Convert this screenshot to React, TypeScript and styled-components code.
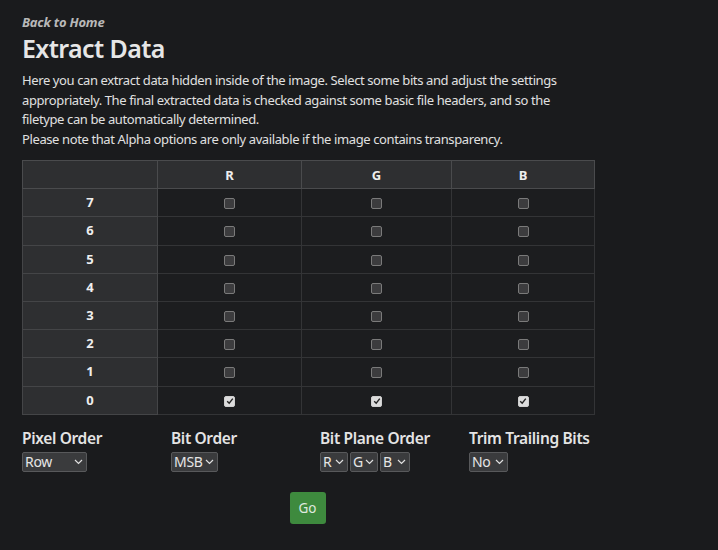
import React from "react";
import styled, { createGlobalStyle } from "styled-components";

const Global = createGlobalStyle`
  html, body { margin: 0; padding: 0; background: #1a1b1d; }
  body { font-family: "Noto Sans", "Open Sans", sans-serif; color: #e2e2e2; }
`;

const Page = styled.div`
  padding: 13px 22px 20px 22px;
  width: 700px;
  box-sizing: border-box;
`;

const Back = styled.a`
  display: block;
  font-size: 13px;
  line-height: 18px;
  font-style: italic;
  font-weight: 700;
  color: #b8b8b8;
  text-decoration: none;
  letter-spacing: -0.2px;
`;

const Title = styled.h1`
  margin: 0;
  font-size: 25px;
  line-height: 34px;
  font-weight: 600;
  color: #e6e6e6;
  letter-spacing: -0.6px;
`;

const Para = styled.p`
  margin: 6px 0 0 0;
  font-size: 13px;
  line-height: 19.5px;
  color: #e0e0e0;
  letter-spacing: -0.39px;
  white-space: nowrap;
`;

const Table = styled.table`
  margin-top: 11px;
  border-collapse: collapse;
  table-layout: fixed;
  font-size: 13px;
`;

const Th = styled.th<{ w: number }>`
  width: ${(p) => p.w}px;
  height: 27.2px;
  background: #2e2f31;
  border: 1px solid #4a4b4d;
  font-weight: 700;
  color: #eee;
  padding: 0;
  vertical-align: middle;
  line-height: 24px;
`;

const RowHead = styled.td`
  height: 27.2px;
  background: #2e2f31;
  border: 1px solid #444547;
  text-align: center;
  font-weight: 700;
  color: #eee;
  padding: 0;
  line-height: 25px;
`;

const Cell = styled.td`
  height: 27.2px;
  background: #1c1d1f;
  border: 1px solid #333436;
  text-align: center;
  padding: 0;
  line-height: 25px;
`;

const Check = styled.span<{ checked?: boolean }>`
  display: inline-flex;
  align-items: center;
  justify-content: center;
  width: 9px;
  height: 9px;
  border: 1px solid ${(p) => (p.checked ? "#cfcfcf" : "#7a7a7a")};
  border-radius: 2px;
  background: ${(p) => (p.checked ? "#dcdcdc" : "#3c3c3e")};
  vertical-align: middle;
`;

const Settings = styled.div`
  display: grid;
  grid-template-columns: repeat(4, 149px);
  margin-top: 13px;
`;

const Group = styled.div`
  display: flex;
  flex-direction: column;
  gap: 4px;
`;

const Label = styled.div`
  font-size: 15.5px;
  line-height: 20px;
  font-weight: 600;
  color: #e4e4e4;
  letter-spacing: -0.35px;
`;

const SelRow = styled.div`
  display: flex;
  gap: 2px;
`;

const Select = styled.div<{ w: number }>`
  width: ${(p) => p.w}px;
  height: 20px;
  box-sizing: border-box;
  display: flex;
  align-items: center;
  justify-content: space-between;
  padding: 0 3px 0 2px;
  background: #3a3b3d;
  border: 1px solid #58595b;
  border-radius: 2px;
  font-size: 14px;
  letter-spacing: -0.3px;
  color: #e6e6e6;
`;

const GoWrap = styled.div`
  width: 571px;
  display: flex;
  justify-content: center;
  margin-top: 20px;
`;

const Go = styled.button`
  width: 36px;
  height: 32px;
  border: none;
  border-radius: 3px;
  background: #3e8a3e;
  color: #dfe8df;
  font-family: inherit;
  font-size: 13.5px;
  padding: 0;
`;

const Chevron = () => (
  <svg width="9" height="6" viewBox="0 0 9 6">
    <path d="M1 1 L4.5 4.5 L8 1" fill="none" stroke="#e0e0e0" strokeWidth="1.2" />
  </svg>
);

const Tick = () => (
  <svg width="8" height="8" viewBox="0 0 8 8">
    <path d="M1.2 4.2 L3.2 6.2 L6.8 1.6" fill="none" stroke="#222" strokeWidth="1.4" />
  </svg>
);

const bits = [7, 6, 5, 4, 3, 2, 1, 0];

export default function App() {
  return (
    <>
      <Global />
      <Page>
        <Back href="#">Back to Home</Back>
        <Title>Extract Data</Title>
        <Para>
          Here you can extract data hidden inside of the image. Select some bits and adjust the settings
          <br />
          appropriately. The final extracted data is checked against some basic file headers, and so the
          <br />
          filetype can be automatically determined.
          <br />
          Please note that Alpha options are only available if the image contains transparency.
        </Para>
        <Table>
          <thead>
            <tr>
              <Th w={134}></Th>
              <Th w={143}>R</Th>
              <Th w={149}>G</Th>
              <Th w={142}>B</Th>
            </tr>
          </thead>
          <tbody>
            {bits.map((b) => (
              <tr key={b}>
                <RowHead>{b}</RowHead>
                {[0, 1, 2].map((c) => (
                  <Cell key={c}>
                    <Check checked={b === 0}>{b === 0 && <Tick />}</Check>
                  </Cell>
                ))}
              </tr>
            ))}
          </tbody>
        </Table>
        <Settings>
          <Group>
            <Label>Pixel Order</Label>
            <SelRow>
              <Select w={65}>Row<Chevron /></Select>
            </SelRow>
          </Group>
          <Group>
            <Label>Bit Order</Label>
            <SelRow>
              <Select w={47}>MSB<Chevron /></Select>
            </SelRow>
          </Group>
          <Group>
            <Label>Bit Plane Order</Label>
            <SelRow>
              <Select w={28}>R<Chevron /></Select>
              <Select w={28}>G<Chevron /></Select>
              <Select w={30}>B<Chevron /></Select>
            </SelRow>
          </Group>
          <Group>
            <Label>Trim Trailing Bits</Label>
            <SelRow>
              <Select w={39}>No<Chevron /></Select>
            </SelRow>
          </Group>
        </Settings>
        <GoWrap>
          <Go>Go</Go>
        </GoWrap>
      </Page>
    </>
  );
}
